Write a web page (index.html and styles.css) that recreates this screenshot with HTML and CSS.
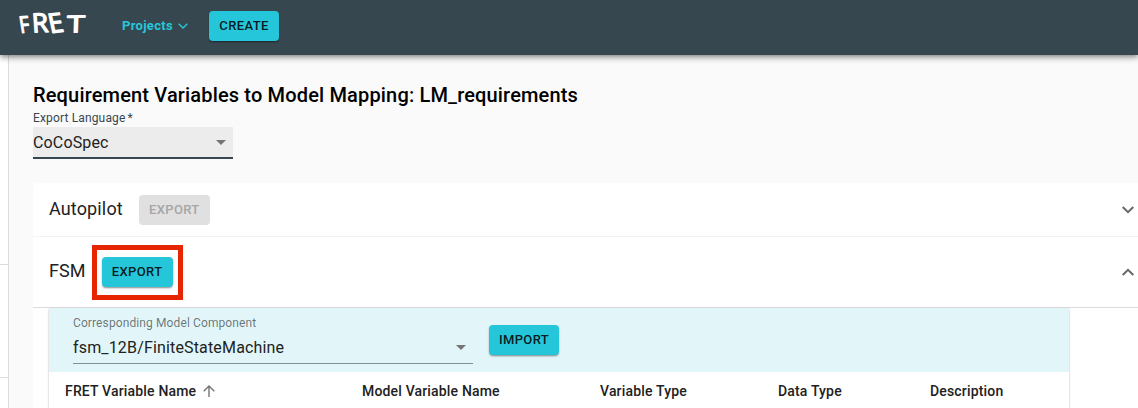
FILE: index.html
```html
<!DOCTYPE html>
<html lang="en">
<head>
<meta charset="utf-8">
<title>FRET</title>
<link rel="stylesheet" href="styles.css">
</head>
<body>
<header class="appbar">
  <svg class="logo" width="70" height="30" viewBox="0 0 70 30" role="img" aria-label="FRET">
    <text transform="translate(3.4 25) rotate(-4) skewX(5) scale(.88 1.04)">F</text>
    <text transform="translate(15.4 24.6) rotate(-2) skewX(2) scale(1.2 1.2)">R</text>
    <text transform="translate(33.2 25) rotate(-6) skewX(6) scale(1.2 1.22)">E</text>
    <text transform="translate(49.8 24.5) rotate(-1) skewX(-3) scale(1.48 1.06)">T</text>
  </svg>
  <a class="projects">Projects
    <svg width="10" height="6" viewBox="0 0 10 6"><path d="M.7.7 5 5 9.3.7"/></svg>
  </a>
  <button class="btn create">CREATE</button>
</header>
<div class="body">
  <aside class="side"><div class="cell first"></div><div class="cell second"></div></aside>
  <main class="main">
    <h1 class="title">Requirement Variables to Model Mapping: LM_requirements</h1>
    <div class="label lang-label">Export Language<span class="star">*</span></div>
    <div class="select lang">CoCoSpec<i class="caret"></i></div>
    <div class="panels">
      <section class="row auto">
        <span class="name">Autopilot</span><button class="btn off" disabled>EXPORT</button>
        <svg class="chev" width="12" height="8" viewBox="0 0 12 8"><path d="M.7 1 6 6.2 11.3 1"/></svg>
      </section>
      <section class="row fsm">
        <span class="name">FSM</span><div class="mark"><button class="btn">EXPORT</button></div>
        <svg class="chev" width="12" height="8" viewBox="0 0 12 8"><path d="M.7 7 6 1.8 11.3 7"/></svg>
      </section>
      <div class="card">
        <div class="toolbar">
          <div class="field">
            <div class="label muted">Corresponding Model Component</div>
            <div class="select model">fsm_12B/FiniteStateMachine<i class="caret"></i></div>
          </div>
          <button class="btn import">IMPORT</button>
        </div>
        <div class="thead">
          <span>FRET Variable Name<svg class="sort" width="12" height="12" viewBox="0 0 12 12"><path d="M6 12V1M.7 6.3 6 1l5.3 5.3"/></svg></span>
          <span>Model Variable Name</span>
          <span>Variable Type</span>
          <span>Data Type</span>
          <span>Description</span>
        </div>
      </div>
    </div>
  </main>
</div>
</body>
</html>
```
FILE: styles.css
```css
* { box-sizing: border-box; }
body {
  margin: 0;
  height: 408px;
  overflow: hidden;
  background: #fafafa;
  color: #212121;
  font-family: Roboto, "Liberation Sans", sans-serif;
}
.appbar {
  position: relative;
  z-index: 2;
  display: flex;
  align-items: flex-start;
  height: 55px;
  padding: 0 17px;
  background: #37474f;
  box-shadow: 0 2px 4px -1px rgba(0,0,0,.3), 0 4px 5px rgba(0,0,0,.16), 0 1px 10px rgba(0,0,0,.12);
}
.logo { margin-top: 8px; overflow: visible; }
.logo text {
  font: 400 22px "Open Sans", sans-serif;
  fill: #fff;
  stroke: #fff;
  stroke-width: 1.1;
  stroke-linejoin: round;
}
.projects {
  display: flex;
  align-items: center;
  width: 87px;
  margin: 17px 0 0 35px;
  color: #26c6da;
  font-size: 13px;
  font-weight: 700;
  line-height: 18px;
  letter-spacing: .3px;
}
.projects svg { margin-left: 5px; }
svg path { fill: none; stroke: currentColor; }
.projects path { stroke-width: 1.4; }
.btn {
  width: 71px;
  height: 30px;
  padding: 0;
  border: 0;
  border-radius: 4px;
  background: #26c6da;
  color: rgba(0,0,0,.87);
  font: 500 13px/30px Roboto, sans-serif;
  letter-spacing: .37px;
  box-shadow: 0 2px 2px -1px rgba(0,0,0,.25), 0 1px 2px rgba(0,0,0,.25);
}
.create { width: 70px; margin-top: 11px; }
.off { margin-left: 16px; background: #e0e0e0; color: #a6a6a6; box-shadow: none; }
.body { display: flex; height: 353px; }
.side { width: 9px; border-right: 1px solid #dcdcdc; background: #fff; }
.cell { border-bottom: 1px solid #dcdcdc; }
.first { height: 210px; }
.second { height: 113px; }
.main { flex: 1; min-width: 0; padding: 28px 0 0 24px; }
.title {
  margin: 0;
  color: #000;
  font-size: 20px;
  font-weight: 500;
  line-height: 24px;
  letter-spacing: .16px;
  white-space: nowrap;
}
.label { font-size: 12px; line-height: 14px; letter-spacing: .15px; }
.lang-label { margin-top: 4px; color: #37474f; }
.star { margin-left: 2px; }
.muted { color: rgba(0,0,0,.54); letter-spacing: .11px; }
.select {
  display: flex;
  align-items: center;
  justify-content: space-between;
  padding-right: 7px;
  font-size: 16px;
  letter-spacing: .15px;
}
.lang {
  width: 200px;
  height: 32px;
  margin-top: 2px;
  border-bottom: 2px solid #37474f;
  background: #ececec;
}
.caret { border: 5px solid transparent; border-top-color: #757575; border-bottom: 0; }
.panels { margin-top: 24px; border-radius: 4px 0 0 0; background: #fff; }
.row { display: flex; align-items: center; padding: 0 4px 0 16px; border-bottom: 1px solid #f3f3f3; }
.auto { height: 54px; }
.fsm { height: 71px; border-color: #dcdcdc; }
.name { padding-bottom: 3px; font-size: 18px; letter-spacing: .1px; }
.auto .name { padding-bottom: 2px; letter-spacing: .14px; }
.chev { margin-left: auto; color: #686868; }
.chev path { stroke-width: 2; }
.mark { margin-left: 6px; padding: 7px 5px 8px; border: 5px solid #e62600; }
.mark .btn { display: block; }
.card {
  width: 1020px;
  height: 101px;
  margin-left: 16px;
  box-shadow: 0 1px 2px rgba(0,0,0,.3);
}
.toolbar { display: flex; height: 64px; padding: 8px 24px; background: #e2f6f9; }
.field { width: 400px; }
.model { height: 34px; padding-top: 2px; border-bottom: 1px solid #859092; letter-spacing: .16px; }
.import { width: 70px; margin: 9px 0 0 16px; }
.thead {
  display: grid;
  grid-template-columns: 297px 238px 178px 152px 1fr;
  padding-left: 16px;
  font-size: 14px;
  font-weight: 500;
  line-height: 39px;
  letter-spacing: .17px;
}
.sort { margin-left: 7px; vertical-align: -1px; color: #757575; }
.sort path { stroke-width: 1.4; }
```
